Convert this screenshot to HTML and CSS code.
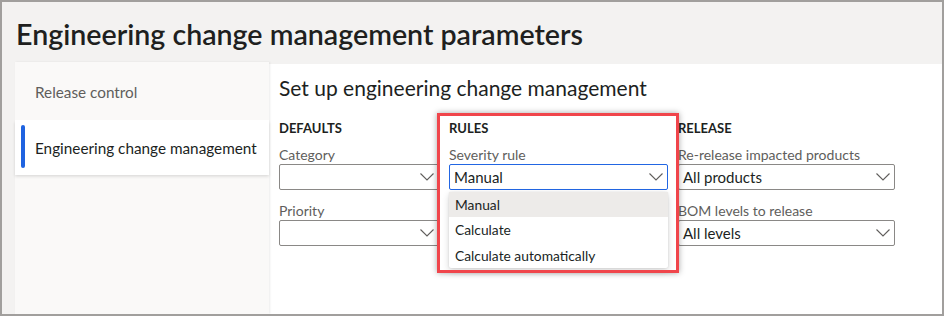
FILE: index.html
```html
<!DOCTYPE html>
<html lang="en">
<head>
<meta charset="utf-8">
<title>Engineering change management parameters</title>
<link rel="stylesheet" href="styles.css">
</head>
<body>
<div class="frame">
  <header class="page-head">
    <h1 class="page-title">Engineering change management parameters</h1>
  </header>
  <div class="workspace">
    <nav class="side-nav">
      <div class="nav-item nav-first">Release control</div>
      <div class="nav-item is-selected">Engineering change management</div>
    </nav>
    <main class="content">
      <h2 class="section-title">Set up engineering change management</h2>
      <div class="columns">
        <section class="group group-defaults">
          <h3 class="group-title">DEFAULTS</h3>
          <label class="field-label">Category</label>
          <div class="select"><span class="select-value"></span><svg class="chev" viewBox="0 0 14 8" width="14" height="8"><path d="M0.5 0.5 L7 7 L13.5 0.5" fill="none" stroke="currentColor" stroke-width="1.1"/></svg></div>
          <label class="field-label field-gap">Priority</label>
          <div class="select"><span class="select-value"></span><svg class="chev" viewBox="0 0 14 8" width="14" height="8"><path d="M0.5 0.5 L7 7 L13.5 0.5" fill="none" stroke="currentColor" stroke-width="1.1"/></svg></div>
        </section>
        <section class="group group-rules">
          <h3 class="group-title">RULES</h3>
          <label class="field-label">Severity rule</label>
          <div class="select is-focused"><span class="select-value">Manual</span><svg class="chev" viewBox="0 0 14 8" width="14" height="8"><path d="M0.5 0.5 L7 7 L13.5 0.5" fill="none" stroke="currentColor" stroke-width="1.1"/></svg></div>
          <ul class="dropdown">
            <li class="dropdown-item is-hover">Manual</li>
            <li class="dropdown-item">Calculate</li>
            <li class="dropdown-item">Calculate automatically</li>
          </ul>
        </section>
        <section class="group group-release">
          <h3 class="group-title">RELEASE</h3>
          <label class="field-label">Re-release impacted products</label>
          <div class="select"><span class="select-value">All products</span><svg class="chev" viewBox="0 0 14 8" width="14" height="8"><path d="M0.5 0.5 L7 7 L13.5 0.5" fill="none" stroke="currentColor" stroke-width="1.1"/></svg></div>
          <label class="field-label field-gap">BOM levels to release</label>
          <div class="select"><span class="select-value">All levels</span><svg class="chev" viewBox="0 0 14 8" width="14" height="8"><path d="M0.5 0.5 L7 7 L13.5 0.5" fill="none" stroke="currentColor" stroke-width="1.1"/></svg></div>
        </section>
      </div>
    </main>
  </div>
  <div class="highlight"></div>
</div>
</body>
</html>
```

FILE: styles.css
```css
* { box-sizing: border-box; }
html, body { margin: 0; padding: 0; background: #ffffff; }
body {
  font-family: "Lato", "Open Sans", "Liberation Sans", sans-serif;
  color: #201f1e;
}
.frame {
  position: relative;
  width: 944px;
  height: 316px;
  border: 2px solid #a19f9d;
  background: #f3f2f1;
  display: flex;
  flex-direction: column;
  overflow: hidden;
}
.page-head {
  height: 60px;
  padding-left: 14px;
  display: flex;
  align-items: center;
}
.page-title {
  margin: 0;
  font-size: 28.6px;
  font-weight: 600;
  line-height: 36px;
  color: #201f1e;
  padding-top: 4px;
}
.workspace {
  flex: 1;
  display: flex;
  padding-left: 13px;
  min-height: 0;
}
.side-nav {
  width: 254px;
  background: #faf9f8;
  padding-top: 1px;
  box-shadow: 1px 0 2px rgba(0,0,0,0.08);
  position: relative;
  z-index: 1;
}
.nav-item {
  position: relative;
  height: 55px;
  display: flex;
  align-items: center;
  padding-left: 20px;
  font-size: 15.3px;
  color: #605e5c;
}
.nav-item.nav-first { height: 57px; }
.nav-item.is-selected {
  background: #ffffff;
  color: #201f1e;
  box-shadow: 0 1.6px 3px rgba(0,0,0,0.13);
}
.nav-item.is-selected::before {
  content: "";
  position: absolute;
  left: 6px;
  top: 5px;
  bottom: 7px;
  width: 4px;
  border-radius: 2px;
  background: #1f63e0;
}
.content {
  flex: 1;
  background: #ffffff;
  margin-top: 2px;
  padding: 10px 0 0 10px;
}
.section-title {
  margin: 0;
  font-size: 21px;
  font-weight: 400;
  line-height: 28px;
  color: #201f1e;
}
.columns {
  display: flex;
  margin-top: 17px;
}
.group {
  display: flex;
  flex-direction: column;
  position: relative;
}
.group-defaults { width: 160px; margin-right: 10px; }
.group-rules { width: 219px; margin-right: 10px; }
.group-release { width: 217px; }
.group-title {
  margin: 0;
  font-size: 13px;
  font-weight: 700;
  line-height: 18px;
  color: #201f1e;
}
.field-label {
  margin-top: 8px;
  font-size: 14px;
  line-height: 19px;
  color: #605e5c;
  white-space: nowrap;
}
.field-label.field-gap { margin-top: 11px; }
.select {
  height: 26px;
  border: 1px solid #8a8886;
  border-radius: 2px;
  display: flex;
  align-items: center;
  justify-content: space-between;
  padding: 0 4px 0 4px;
  background: #ffffff;
}
.select.is-focused { border-color: #2266e3; }
.select-value {
  font-size: 15px;
  color: #201f1e;
  line-height: 20px;
}
.chev { color: #605e5c; display: block; }
.dropdown {
  position: absolute;
  left: 0;
  top: 73px;
  width: 219px;
  margin: 0;
  padding: 0;
  list-style: none;
  background: #ffffff;
  border-radius: 2px;
  box-shadow: 0 3px 7px rgba(0,0,0,0.16), 0 0 2px rgba(0,0,0,0.12);
}
.dropdown-item {
  height: 25.3px;
  display: flex;
  align-items: center;
  padding-left: 6px;
  font-size: 13.8px;
  color: #201f1e;
}
.dropdown-item.is-hover { background: #edebe9; }
.highlight {
  position: absolute;
  left: 435px;
  top: 111px;
  width: 242px;
  height: 160px;
  border: 3px solid #f0454b;
  box-shadow: 0 0 6px rgba(0,0,0,0.35);
  pointer-events: none;
}
```
